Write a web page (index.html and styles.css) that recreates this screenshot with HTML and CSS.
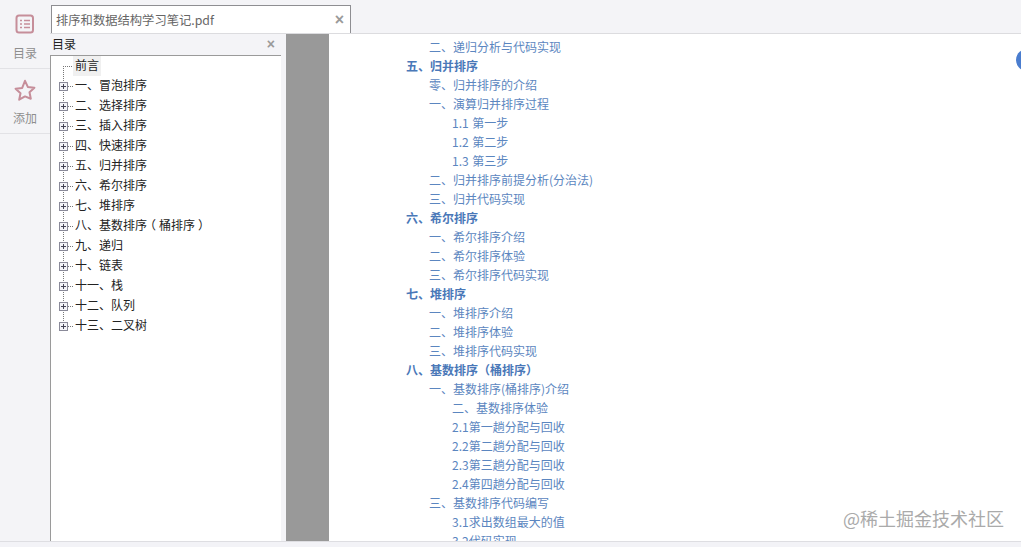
FILE: index.html
```html
<!DOCTYPE html>
<html lang="zh">
<head>
<meta charset="utf-8">
<title>排序和数据结构学习笔记.pdf</title>
<link rel="stylesheet" href="styles.css">
</head>
<body>
<div class="app">
  <aside class="rail">
    <div class="rail-item rail-toc">
      <svg class="rail-icon" width="20" height="20" viewBox="0 0 20 20" fill="none" stroke="#c68e9a" stroke-width="2"><rect x="1.500" y="1.500" width="16.500" height="17" rx="2.500"/><path d="M5 6.500h2M9 6.500h6M5 10h2M9 10h6M5 13.500h2M9 13.500h6" stroke-width="1.600"/></svg>
      <span class="rail-label">目录</span>
    </div>
    <div class="rail-item rail-add">
      <svg class="rail-icon" width="22" height="22" viewBox="0 0 22 22" fill="none" stroke="#c68e9a" stroke-width="2" stroke-linejoin="round"><path d="M11 1.800l2.800 6.100 6.600.8-4.900 4.500 1.300 6.500L11 17.400l-5.800 3.300 1.300-6.500-4.900-4.500 6.600-.8z"/></svg>
      <span class="rail-label">添加</span>
    </div>
  </aside>
  <div class="main">
    <header class="tabbar">
      <div class="tab">
        <span class="tab-title">排序和数据结构学习笔记.pdf</span>
        <span class="close tab-close">×</span>
      </div>
    </header>
    <div class="workspace">
      <section class="panel">
        <div class="panel-head"><span>目录</span><span class="close">×</span></div>
        <ul class="tree">
          <li class="node leaf"><span class="hline"></span><span class="label current">前言</span></li>
          <li class="node"><span class="box"></span><span class="hline"></span><span class="label">一、冒泡排序</span></li>
          <li class="node"><span class="box"></span><span class="hline"></span><span class="label">二、选择排序</span></li>
          <li class="node"><span class="box"></span><span class="hline"></span><span class="label">三、插入排序</span></li>
          <li class="node"><span class="box"></span><span class="hline"></span><span class="label">四、快速排序</span></li>
          <li class="node"><span class="box"></span><span class="hline"></span><span class="label">五、归并排序</span></li>
          <li class="node"><span class="box"></span><span class="hline"></span><span class="label">六、希尔排序</span></li>
          <li class="node"><span class="box"></span><span class="hline"></span><span class="label">七、堆排序</span></li>
          <li class="node"><span class="box"></span><span class="hline"></span><span class="label">八、基数排序<span class="paren">（</span>桶排序<span class="paren">）</span></span></li>
          <li class="node"><span class="box"></span><span class="hline"></span><span class="label">九、递归</span></li>
          <li class="node"><span class="box"></span><span class="hline"></span><span class="label">十、链表</span></li>
          <li class="node"><span class="box"></span><span class="hline"></span><span class="label">十一、栈</span></li>
          <li class="node"><span class="box"></span><span class="hline"></span><span class="label">十二、队列</span></li>
          <li class="node last"><span class="box"></span><span class="hline"></span><span class="label">十三、二叉树</span></li>
        </ul>
      </section>
      <div class="gutter"></div>
      <main class="page">
        <ol class="toc">
          <li class="l2">二、递归分析与代码实现</li>
          <li class="l1">五、归并排序</li>
          <li class="l2">零、归并排序的介绍</li>
          <li class="l2">一、演算归并排序过程</li>
          <li class="l3">1.1 第一步</li>
          <li class="l3">1.2 第二步</li>
          <li class="l3">1.3 第三步</li>
          <li class="l2">二、归并排序前提分析(分治法)</li>
          <li class="l2">三、归并代码实现</li>
          <li class="l1">六、希尔排序</li>
          <li class="l2">一、希尔排序介绍</li>
          <li class="l2">二、希尔排序体验</li>
          <li class="l2">三、希尔排序代码实现</li>
          <li class="l1">七、堆排序</li>
          <li class="l2">一、堆排序介绍</li>
          <li class="l2">二、堆排序体验</li>
          <li class="l2">三、堆排序代码实现</li>
          <li class="l1">八、基数排序（桶排序）</li>
          <li class="l2">一、基数排序(桶排序)介绍</li>
          <li class="l3">二、基数排序体验</li>
          <li class="l3">2.1第一趟分配与回收</li>
          <li class="l3">2.2第二趟分配与回收</li>
          <li class="l3">2.3第三趟分配与回收</li>
          <li class="l3">2.4第四趟分配与回收</li>
          <li class="l2">三、基数排序代码编写</li>
          <li class="l3">3.1求出数组最大的值</li>
          <li class="l3">3.2代码实现</li>
        </ol>
        <div class="fab"></div>
        <div class="watermark">@稀土掘金技术社区</div>
      </main>
    </div>
  </div>
</div>
<footer class="statusbar"></footer>
</body>
</html>
```
FILE: styles.css
```css
* { box-sizing: border-box; }
html, body { margin: 0; height: 100%; overflow: hidden; }
body {
  width: 1021px;
  height: 547px;
  display: flex;
  flex-direction: column;
  background: #f4f4f7;
  font-family: "Noto Sans CJK SC", "Noto Sans", sans-serif;
  font-size: 12px;
}
.app { flex: 1; min-height: 0; display: flex; }
.statusbar { height: 6px; background: #f3f3f7; border-top: 1px solid #dedee2; }

.rail { width: 50px; flex: none; background: #f4f4f7; }
.rail-item {
  display: flex;
  flex-direction: column;
  align-items: center;
  border-bottom: 1px solid #e2e2e6;
  color: #8e8e8e;
}
.rail-toc { height: 69px; padding-top: 14px; }
.rail-add { height: 65px; padding-top: 10px; }
.rail-icon { display: block; flex: none; margin-left: -1px; }
.rail-label { line-height: 16px; margin-top: 11px; }
.rail-add .rail-label { margin-top: 9px; }

.main { flex: 1; min-width: 0; display: flex; flex-direction: column; }
.tabbar { height: 34px; flex: none; padding: 5px 0 0 1px; border-bottom: 1px solid #dcdcdf; }
.tab {
  width: 300px;
  height: 28px;
  background: #fff;
  border: 1px solid #8e8e92;
  border-bottom: 0;
  display: flex;
  align-items: center;
  justify-content: space-between;
  padding: 0 6px 0 4px;
  color: #666;
  font-size: 12.3px;
  position: relative;
  z-index: 1;
}
.tab-title { white-space: nowrap; }
.close { color: #9a9a9a; font: bold 14px/1 "Liberation Sans", sans-serif; }
.tab-close { font-size: 16px; }

.workspace { flex: 1; min-height: 0; display: flex; }
.panel { width: 236px; flex: none; display: flex; flex-direction: column; background: #f4f4f7; padding-right: 5px; }
.panel-head {
  height: 21px;
  flex: none;
  display: flex;
  align-items: center;
  justify-content: space-between;
  padding: 0 6px 2px 2px;
  color: #222;
  font-size: 12px;
}
.tree {
  list-style: none;
  flex: 1;
  margin: 0;
  padding: 0;
  background: #fff;
  border-top: 1px solid #9a9a9a;
  border-left: 1px solid #9a9a9a;
}
.node {
  height: 20px;
  display: flex;
  align-items: center;
  padding-left: 8px;
  color: #222;
  background: repeating-linear-gradient(#777 0 1px, transparent 1px 2px) 12px 0 / 1px 100% no-repeat;
}
.node.leaf { background-position: 12px 10px; background-size: 1px 10px; }
.node.last { background-size: 1px 10px; }
.box {
  width: 9px;
  height: 9px;
  flex: none;
  border: 1px solid #8a8a99;
  background:
    linear-gradient(#445, #445) center / 5px 1px no-repeat,
    linear-gradient(#445, #445) center / 1px 5px no-repeat,
    #f4f4f8;
}
.hline { width: 6px; height: 1px; flex: none; background: linear-gradient(90deg, #777 50%, transparent 50%) 0 0 / 2px 1px repeat-x; }
.leaf .hline { width: 11px; margin-left: 4px; }
.label { padding: 0 1px 2px; line-height: 18px; white-space: nowrap; }
.current { background: #f0f0f0; }
.leaf .label { margin-left: -1px; padding: 0 2px 2px; }
.paren { font-feature-settings: "halt"; padding: 0 3px; }

.gutter { width: 43px; flex: none; background: #999; }
.page { flex: 1; min-width: 0; background: #fff; position: relative; overflow: hidden; }
.toc { list-style: none; margin: 0; padding: 3px 0 0 0; color: #5b86c0; }
.toc li { height: 19px; line-height: 19px; white-space: nowrap; word-spacing: 1px; }
.l1 { padding-left: 77px; font-weight: 700; color: #4a78b8; }
.l2 { padding-left: 100px; }
.l3 { padding-left: 123px; }
.fab { position: absolute; right: -22px; top: 14px; width: 27px; height: 24px; border-radius: 50%; background: #4a7dcf; }
.watermark { position: absolute; right: 17px; bottom: 11px; font-size: 18px; line-height: 24px; color: #aaa; white-space: nowrap; }
```
